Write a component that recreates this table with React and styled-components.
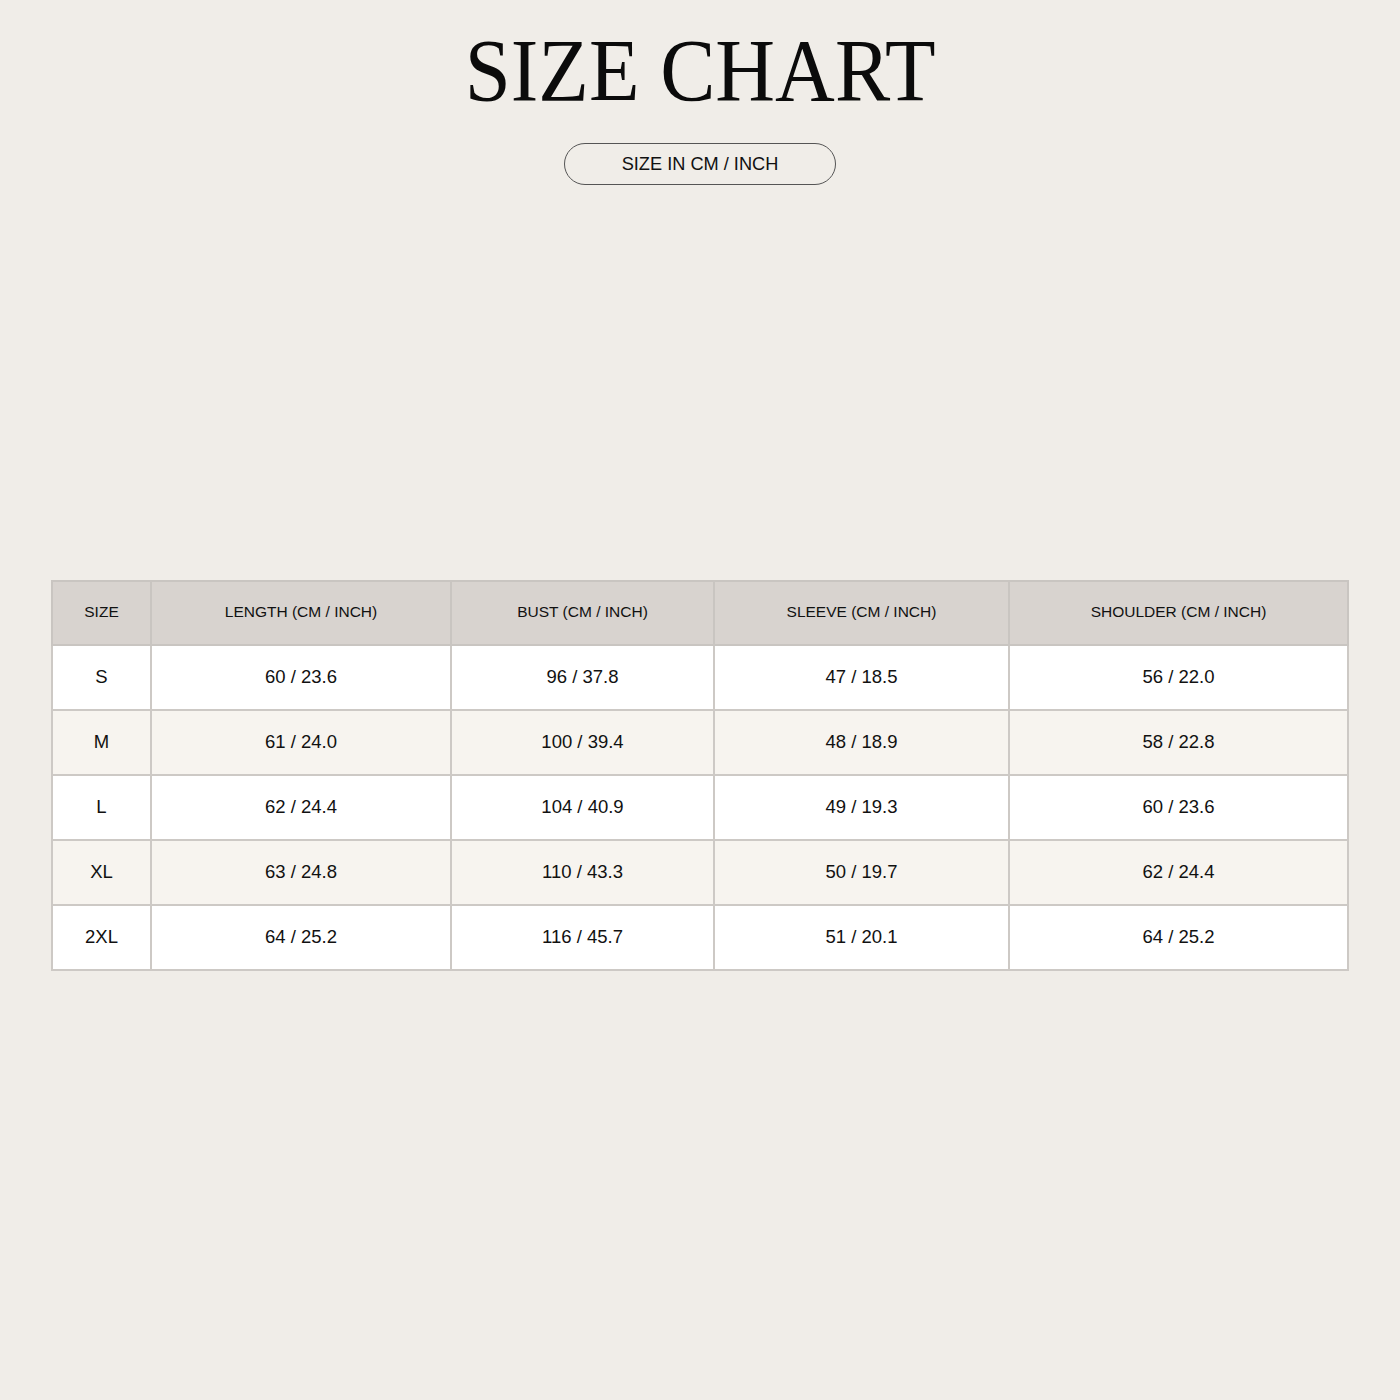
import React from "react";
import styled, { createGlobalStyle } from "styled-components";

const Global = createGlobalStyle`
  html, body { margin: 0; padding: 0; background: #f0ede8; }
  body { font-family: "Liberation Sans", Arial, sans-serif; color: #111; }
`;

const Page = styled.div`
  width: 1400px;
  height: 1400px;
  background: #f0ede8;
  display: flex;
  flex-direction: column;
  align-items: center;
  box-sizing: border-box;
  padding-top: 24px;
`;

const Title = styled.h1`
  margin: 0;
  font-family: "Liberation Serif", "Times New Roman", serif;
  font-weight: 400;
  font-size: 89px;
  line-height: 93px;
  color: #0b0b0b;
  transform: scaleX(0.93);
  white-space: nowrap;
`;

const Pill = styled.div`
  margin-top: 26px;
  width: 272px;
  height: 42px;
  box-sizing: border-box;
  border: 1px solid #555;
  border-radius: 21px;
  display: flex;
  align-items: center;
  justify-content: center;
  font-size: 18.2px;
  color: #111;
`;

const Table = styled.table`
  margin-top: 395px;
  width: 1296px;
  border-collapse: collapse;
  table-layout: fixed;
  border: 2px solid #c6c2be;
`;

const HeadCell = styled.th`
  height: 60px;
  padding: 0 0 2px;
  background: #d8d3cf;
  font-weight: 400;
  font-size: 15.5px;
  text-align: center;
  border: 2px solid #c9c5c1;
  color: #111;
`;

const Row = styled.tr`
  background: ${(p) => (p.$alt ? "#f7f4ef" : "#ffffff")};
`;

const Cell = styled.td`
  height: 61px;
  padding: 0 0 2px;
  font-size: 18.5px;
  text-align: center;
  border: 2px solid #cdc9c5;
  color: #111;
`;

const cols = [99, 300, 263, 295, 339];
const headers = [
  "SIZE",
  "LENGTH (CM / INCH)",
  "BUST (CM / INCH)",
  "SLEEVE (CM / INCH)",
  "SHOULDER (CM / INCH)",
];
const rows = [
  ["S", "60 / 23.6", "96 / 37.8", "47 / 18.5", "56 / 22.0"],
  ["M", "61 / 24.0", "100 / 39.4", "48 / 18.9", "58 / 22.8"],
  ["L", "62 / 24.4", "104 / 40.9", "49 / 19.3", "60 / 23.6"],
  ["XL", "63 / 24.8", "110 / 43.3", "50 / 19.7", "62 / 24.4"],
  ["2XL", "64 / 25.2", "116 / 45.7", "51 / 20.1", "64 / 25.2"],
];

export default function App() {
  return (
    <>
      <Global />
      <Page>
        <Title>SIZE CHART</Title>
        <Pill>SIZE IN CM / INCH</Pill>
        <Table>
          <colgroup>
            {cols.map((w, i) => (
              <col key={i} style={{ width: w }} />
            ))}
          </colgroup>
          <thead>
            <tr>
              {headers.map((h) => (
                <HeadCell key={h}>{h}</HeadCell>
              ))}
            </tr>
          </thead>
          <tbody>
            {rows.map((r, i) => (
              <Row key={r[0]} $alt={i % 2 === 1}>
                {r.map((c, j) => (
                  <Cell key={j}>{c}</Cell>
                ))}
              </Row>
            ))}
          </tbody>
        </Table>
      </Page>
    </>
  );
}
